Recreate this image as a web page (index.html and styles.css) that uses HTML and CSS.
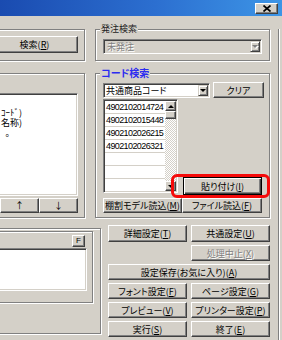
FILE: index.html
```html
<!DOCTYPE html>
<html lang="ja">
<head>
  <meta charset="UTF-8">
  <title>商品検索</title>
  <link rel="stylesheet" href="styles.css">
</head>
<body>
  <div class="window">
    <div class="titlebar">
      <button class="btn btn-close" aria-label="閉じる">
        <svg width="8" height="7" viewBox="0 0 8 7"><path d="M0.5 0.5L7.5 6.5M7.5 0.5L0.5 6.5" stroke="#000" stroke-width="1.7"/></svg>
      </button>
    </div>

    <div class="client">
      <div class="row row-top">
        <div class="group group-left group-search">
          <button class="btn btn-search">検索(<u>R</u>)</button>
        </div>
        <div class="group group-right group-order">
          <span class="group-label">発注検索</span>
          <div class="combo combo-disabled sunken">
            <span class="combo-text">未発注</span>
            <span class="combo-arrow"><span class="tri-down"></span></span>
          </div>
        </div>
      </div>

      <div class="row row-mid">
        <div class="group group-left group-memo">
          <div class="memo sunken">
            <div class="memo-line"></div>
            <div class="memo-line"><span>ｺｰﾄﾞ)</span></div>
            <div class="memo-line"><span>名称)</span></div>
            <div class="memo-line memo-short"><span>｡</span></div>
          </div>
          <div class="updown">
            <button class="btn">↑</button>
            <button class="btn">↓</button>
          </div>
        </div>

        <div class="group group-right group-code">
          <span class="group-label label-blue">コード検索</span>
          <div class="code-head">
            <div class="combo combo-code sunken">
              <span class="combo-text">共通商品コード</span>
              <span class="combo-arrow"><span class="tri-down"></span></span>
            </div>
            <button class="btn btn-clear">クリア</button>
          </div>
          <div class="code-body">
            <div class="code-list sunken">
              <div class="list-rows">
                <div class="list-row">4902102014724</div>
                <div class="list-row">4902102015448</div>
                <div class="list-row">4902102026215</div>
                <div class="list-row">4902102026321</div>
                <div class="list-row"></div>
                <div class="list-row"></div>
                <div class="list-row"></div>
              </div>
              <div class="scrollbar">
                <span class="btn sb-btn"><span class="tri-up"></span></span>
                <span class="btn sb-thumb"></span>
                <span class="sb-track"></span>
                <span class="btn sb-btn"><span class="tri-down"></span></span>
              </div>
            </div>
            <div class="paste-area">
              <button class="btn btn-default btn-paste">貼り付け(<u>I</u>)</button>
            </div>
            <span class="highlight"></span>
          </div>
          <div class="code-foot">
            <button class="btn btn-model">棚割モデル読込(<u>M</u>)</button>
            <button class="btn btn-file">ファイル読込(<u>F</u>)</button>
          </div>
        </div>
      </div>

      <div class="row row-bottom">
        <div class="group group-left group-note">
          <div class="note-frame">
            <div class="note-bar">
              <button class="btn btn-f">F</button>
            </div>
            <div class="note-text sunken"></div>
          </div>
        </div>

        <div class="actions">
          <button class="btn">詳細設定(<u>T</u>)</button>
          <button class="btn">共通設定(<u>U</u>)</button>
          <button class="btn btn-disabled col-2">処理中止(<u>X</u>)</button>
          <button class="btn span-2">設定保存(お気に入り)(<u>A</u>)</button>
          <button class="btn">フォント設定(<u>F</u>)</button>
          <button class="btn">ページ設定(<u>G</u>)</button>
          <button class="btn">プレビュー(<u>V</u>)</button>
          <button class="btn">プリンター設定(<u>P</u>)</button>
          <button class="btn">実行(<u>S</u>)</button>
          <button class="btn">終了(<u>E</u>)</button>
        </div>
      </div>
    </div>
  </div>
</body>
</html>
```

FILE: styles.css
```css
html, body {
  margin: 0;
}
body {
  background: #d4d0c8;
  font-family: "Noto Sans CJK JP", sans-serif;
  font-size: 9px;
  color: #000;
  font-feature-settings: "palt";
}
.window {
  width: 282px;
  height: 340px;
  overflow: hidden;
}
.titlebar {
  height: 16px;
  box-sizing: border-box;
  padding: 3px 4px 0 0;
  display: flex;
  justify-content: flex-end;
  align-items: flex-start;
  background: linear-gradient(90deg, #1a4bb0, #2c6fd0 55%, #3d95e6);
}

/* classic 3d controls */
.btn {
  font: inherit;
  font-feature-settings: "palt";
  color: #000;
  background: #d4d0c8;
  box-sizing: border-box;
  margin: 0;
  padding: 0;
  border: 1px solid;
  border-color: #fff #404040 #404040 #fff;
  box-shadow: inset -1px -1px 0 #808080;
  line-height: 1;
  display: flex;
  align-items: center;
  justify-content: center;
  white-space: nowrap;
}
.btn u {
  text-underline-offset: 1px;
}
.btn-default {
  border-color: #000;
  box-shadow: inset 1px 1px 0 #fff, inset -1px -1px 0 #404040, inset -2px -2px 0 #808080;
}
.btn-disabled {
  color: #808080;
  text-shadow: 1px 1px 0 #fff;
}
.sunken {
  box-sizing: border-box;
  border: 1px solid;
  border-color: #808080 #fff #fff #808080;
  box-shadow: inset 1px 1px 0 #404040, inset -1px -1px 0 #d4d0c8;
}
.btn-close {
  width: 23px;
  height: 11px;
}

.client {
  width: 279px;
  height: 324px;
  box-sizing: border-box;
  border-right: 1px solid #808080;
  box-shadow: 1px 0 0 #fff;
}
.row {
  display: flex;
  align-items: flex-start;
}
.row-top {
  margin-top: 13px;
}
.row-mid {
  margin-top: 12px;
}
.row-bottom {
  margin-top: 7px;
}

/* group boxes */
.group {
  position: relative;
  flex: none;
  box-sizing: border-box;
  border: 1px solid #808080;
  box-shadow: inset 1px 1px 0 #fff, 1px 1px 0 #fff;
}
.group-left {
  margin-left: -10px;
  width: 95px;
}
.group-right {
  margin-left: 10px;
  width: 175px;
}
.group-label {
  position: absolute;
  top: -7px;
  left: 4px;
  padding: 0 1px;
  line-height: 11px;
  background: #d4d0c8;
  color: #222;
  white-space: nowrap;
}
.label-blue {
  color: #2b2bf0;
  font-weight: bold;
  font-size: 10px;
}

.group-search {
  height: 32px;
  padding: 6px 6px 0 0;
}
.btn-search {
  width: 100%;
  height: 17px;
}
.group-order {
  height: 32px;
  padding: 9px 7px 0 7px;
}

/* combo boxes */
.combo {
  display: flex;
  align-items: stretch;
  padding: 1px 1px 1px 2px;
}
.combo-text {
  flex: 1;
  display: flex;
  align-items: center;
  white-space: nowrap;
}
.combo-arrow {
  width: 10px;
  box-sizing: border-box;
  border: 1px solid;
  border-color: #d4d0c8 #404040 #404040 #d4d0c8;
  box-shadow: inset 1px 1px 0 #fff, inset -1px -1px 0 #808080;
  background: #d4d0c8;
  display: flex;
  align-items: center;
  justify-content: center;
}
.combo-disabled {
  height: 15px;
  background: #d4d0c8;
}
.combo-disabled .combo-text {
  color: #808080;
  text-shadow: 1px 1px 0 #fff;
  padding-left: 1px;
}
.combo-disabled .tri-down {
  border-top-color: #808080;
  filter: drop-shadow(1px 1px 0 #fff);
}
.tri-down {
  width: 0;
  height: 0;
  border-left: 3px solid transparent;
  border-right: 3px solid transparent;
  border-top: 3px solid #000;
}
.tri-up {
  width: 0;
  height: 0;
  border-left: 3px solid transparent;
  border-right: 3px solid transparent;
  border-bottom: 3px solid #000;
}

/* left memo group */
.group-memo {
  height: 145px;
  padding: 19px 6px 0 0;
}
.memo {
  height: 103px;
  background: #fff;
  padding-top: 4px;
}
.memo-line {
  height: 10px;
  line-height: 10px;
  width: 30px;
  display: flex;
  justify-content: flex-end;
  white-space: nowrap;
}
.memo-short {
  width: 18px;
}
.updown {
  margin-top: 2px;
  display: flex;
  justify-content: flex-end;
}
.updown .btn {
  width: 39px;
  height: 15px;
}

/* code search group */
.group-code {
  height: 145px;
  padding: 8px 5px 0 7px;
}
.code-head {
  display: flex;
  align-items: flex-start;
  gap: 3px;
  height: 16px;
}
.combo-code {
  width: 107px;
  height: 15px;
  margin-top: 1px;
  background: #fff;
}
.btn-clear {
  width: 51px;
  height: 16px;
}
.code-body {
  position: relative;
  display: flex;
  margin-top: 1px;
  height: 96px;
}
.code-list {
  width: 75px;
  height: 94px;
  padding: 1px;
  background: #fff;
  display: flex;
  overflow: hidden;
}
.list-rows {
  flex: 1;
  min-width: 0;
  overflow: hidden;
}
.list-row {
  height: 13px;
  box-sizing: border-box;
  border-bottom: 1px solid #d4d0c8;
  line-height: 12px;
  padding-left: 1px;
  font-family: "Liberation Sans", sans-serif;
  font-size: 9px;
  letter-spacing: -0.6px;
  white-space: nowrap;
}
.scrollbar {
  width: 11px;
  flex: none;
  display: flex;
  flex-direction: column;
}
.sb-btn {
  height: 10px;
  flex: none;
}
.sb-thumb {
  height: 8px;
  flex: none;
}
.sb-track {
  flex: 1;
  background: repeating-conic-gradient(#fff 0 25%, #d4d0c8 0 50%) 0 0 / 2px 2px;
}
.paste-area {
  flex: 1;
  display: flex;
  align-items: flex-end;
  padding-left: 5px;
}
.btn-paste {
  width: 79px;
  height: 18px;
}
.highlight {
  position: absolute;
  left: 68px;
  top: 75px;
  width: 99px;
  height: 24px;
  box-sizing: border-box;
  border: 3px solid #f50a0a;
  border-radius: 6px;
}
.code-foot {
  display: flex;
  margin-top: 3px;
}
.code-foot .btn {
  height: 15px;
}
.btn-model {
  width: 79px;
}
.btn-file {
  width: 80px;
}

/* bottom left */
.group-note {
  width: 111px;
  height: 106px;
  margin-top: 3px;
  padding: 2px 7px 0 0;
}
.note-frame {
  height: 72px;
  box-sizing: border-box;
  border: 1px solid #808080;
  box-shadow: inset 1px 1px 0 #fff, 1px 1px 0 #fff;
  padding: 3px 5px 0 0;
}
.note-bar {
  display: flex;
  justify-content: flex-end;
  height: 12px;
}
.btn-f {
  width: 13px;
  height: 12px;
  margin-right: 2px;
  font-family: "Liberation Sans", sans-serif;
  font-size: 8px;
}
.note-text {
  margin-top: 1px;
  height: 43px;
  background: #fff;
}

/* action buttons */
.actions {
  margin-left: 7px;
  width: 162px;
  display: grid;
  grid-template-columns: 79px 79px;
  grid-template-rows: 17px 16px 16px 16px 16px 16px;
  column-gap: 4px;
  row-gap: 3px;
}
.col-2 {
  grid-column: 2;
}
.span-2 {
  grid-column: 1 / 3;
}
```
